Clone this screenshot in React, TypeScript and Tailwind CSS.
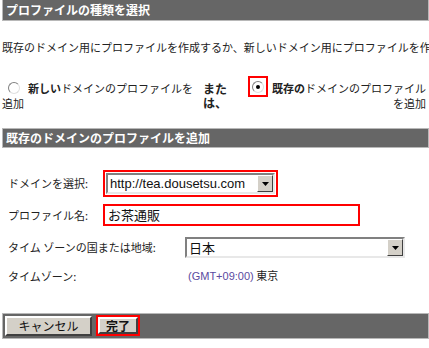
import React from "react";

function Radio({ checked }: { checked?: boolean }) {
  return (
    <span className="inline-flex h-[12px] w-[12px] items-center justify-center rounded-full border border-t-[#808080] border-l-[#808080] border-r-[#e0e0e0] border-b-[#e0e0e0] bg-white align-[-1px]">
      {checked && <span className="h-[4px] w-[4px] rounded-full bg-black" />}
    </span>
  );
}

function DropButton() {
  return (
    <span className="flex h-[17px] w-[16px] items-center justify-center border border-t-[#fff] border-l-[#fff] border-r-[#404040] border-b-[#404040] bg-[#d4d0c8]">
      <svg width="7" height="4" viewBox="0 0 7 4">
        <path d="M0 0h7L3.5 4z" fill="#000" />
      </svg>
    </span>
  );
}

function Select({ value, width, latin }: { value: string; width: string; latin?: boolean }) {
  return (
    <div className={`flex h-[21px] items-center justify-between border-2 border-t-[#808080] border-l-[#808080] border-r-[#e8e8e8] border-b-[#e8e8e8] bg-white pl-[2px] ${width}`}>
      <span
        className="text-[13px] leading-none text-[#111]"
        style={latin ? { fontFamily: '"Liberation Sans", Arial, sans-serif' } : undefined}
      >
        {value}
      </span>
      <DropButton />
    </div>
  );
}

function Bar({ children, className = "" }: { children?: React.ReactNode; className?: string }) {
  return (
    <div className={`ml-[2px] border border-[#b8b8b8] bg-[#666666] px-[3px] font-bold text-[12px] text-white ${className}`}>
      {children}
    </div>
  );
}

export default function App() {
  return (
    <div className="h-[348px] w-[429px] overflow-hidden bg-white text-[11px] text-[#222]" style={{ fontFamily: '"Noto Sans CJK JP", "Liberation Sans", sans-serif' }}>
      <Bar className="h-[21px] border-t-0 leading-[19px]">プロファイルの種類を選択</Bar>

      <p className="mt-[20px] whitespace-nowrap pl-[2px] leading-[13px]">
        既存のドメイン用にプロファイルを作成するか、新しいドメイン用にプロファイルを作成します。
      </p>

      <div className="mt-[27px] flex leading-[15px]">
        <div className="w-[203px] pl-[2px]">
          <span className="ml-[6px] mr-[8px]"><Radio /></span>
          <b>新しい</b>ドメインのプロファイルを追加
        </div>
        <div className="w-[38px] pt-[1px] font-bold leading-[14px] text-[12px]">
          また
          <br />
          は、
        </div>
        <div className="flex-1 pr-[3px] text-right">
          <div className="-mt-[5px] flex items-start justify-end">
            <span className="mr-[4px] inline-flex h-[21px] w-[20px] items-center justify-center border-2 border-[#ff0000]">
              <Radio checked />
            </span>
            <span className="pt-[5px]">
              <b>既存の</b>ドメインのプロファイル
            </span>
          </div>
          <div className="-mt-[1px]">を追加</div>
        </div>
      </div>

      <Bar className="mt-[17px] h-[20px] leading-[18px]">既存のドメインのプロファイルを追加</Bar>

      <div className="mt-[22px] flex items-center pl-[8px]">
        <span className="w-[95px]">ドメインを選択:</span>
        <div className="border-2 border-[#ff0000] p-[1px]">
          <Select value="http://tea.dousetsu.com" width="w-[169px]" latin />
        </div>
      </div>

      <div className="mt-[7px] flex items-center pl-[8px]">
        <span className="w-[95px]">プロファイル名:</span>
        <div className="flex h-[22px] w-[257px] items-center border-2 border-[#ff0000] bg-white pl-[3px] text-[13px] text-[#111]">
          お茶通販
        </div>
      </div>

      <div className="mt-[11px] flex items-center pl-[8px]">
        <span className="w-[177px]">タイム ゾーンの国または地域:</span>
        <Select value="日本" width="w-[220px]" />
      </div>

      <div className="mt-[9px] flex items-center pl-[8px]">
        <span className="w-[180px]">タイムゾーン:</span>
        <span className="text-[11px]">
          <span className="text-[#5a4aa0]" style={{ fontFamily: '"Liberation Sans", sans-serif' }}>(GMT+09:00)</span> 東京
        </span>
      </div>

      <div className="ml-[2px] mt-[28px] flex h-[26px] items-center gap-[4px] border border-[#b8b8b8] bg-[#666666] pl-[2px]">
        <button className="h-[20px] w-[87px] border-2 border-t-[#fff] border-l-[#fff] border-r-[#404040] border-b-[#404040] bg-[#d4d0c8] text-[12px] leading-none text-[#111]">
          キャンセル
        </button>
        <span className="border-2 border-[#ff0000]">
          <button className="block h-[17px] w-[40px] border-2 border-t-[#fff] border-l-[#fff] border-r-[#404040] border-b-[#404040] bg-[#d4d0c8] text-[12px] font-bold leading-none text-[#111]">
            完了
          </button>
        </span>
      </div>
    </div>
  );
}
